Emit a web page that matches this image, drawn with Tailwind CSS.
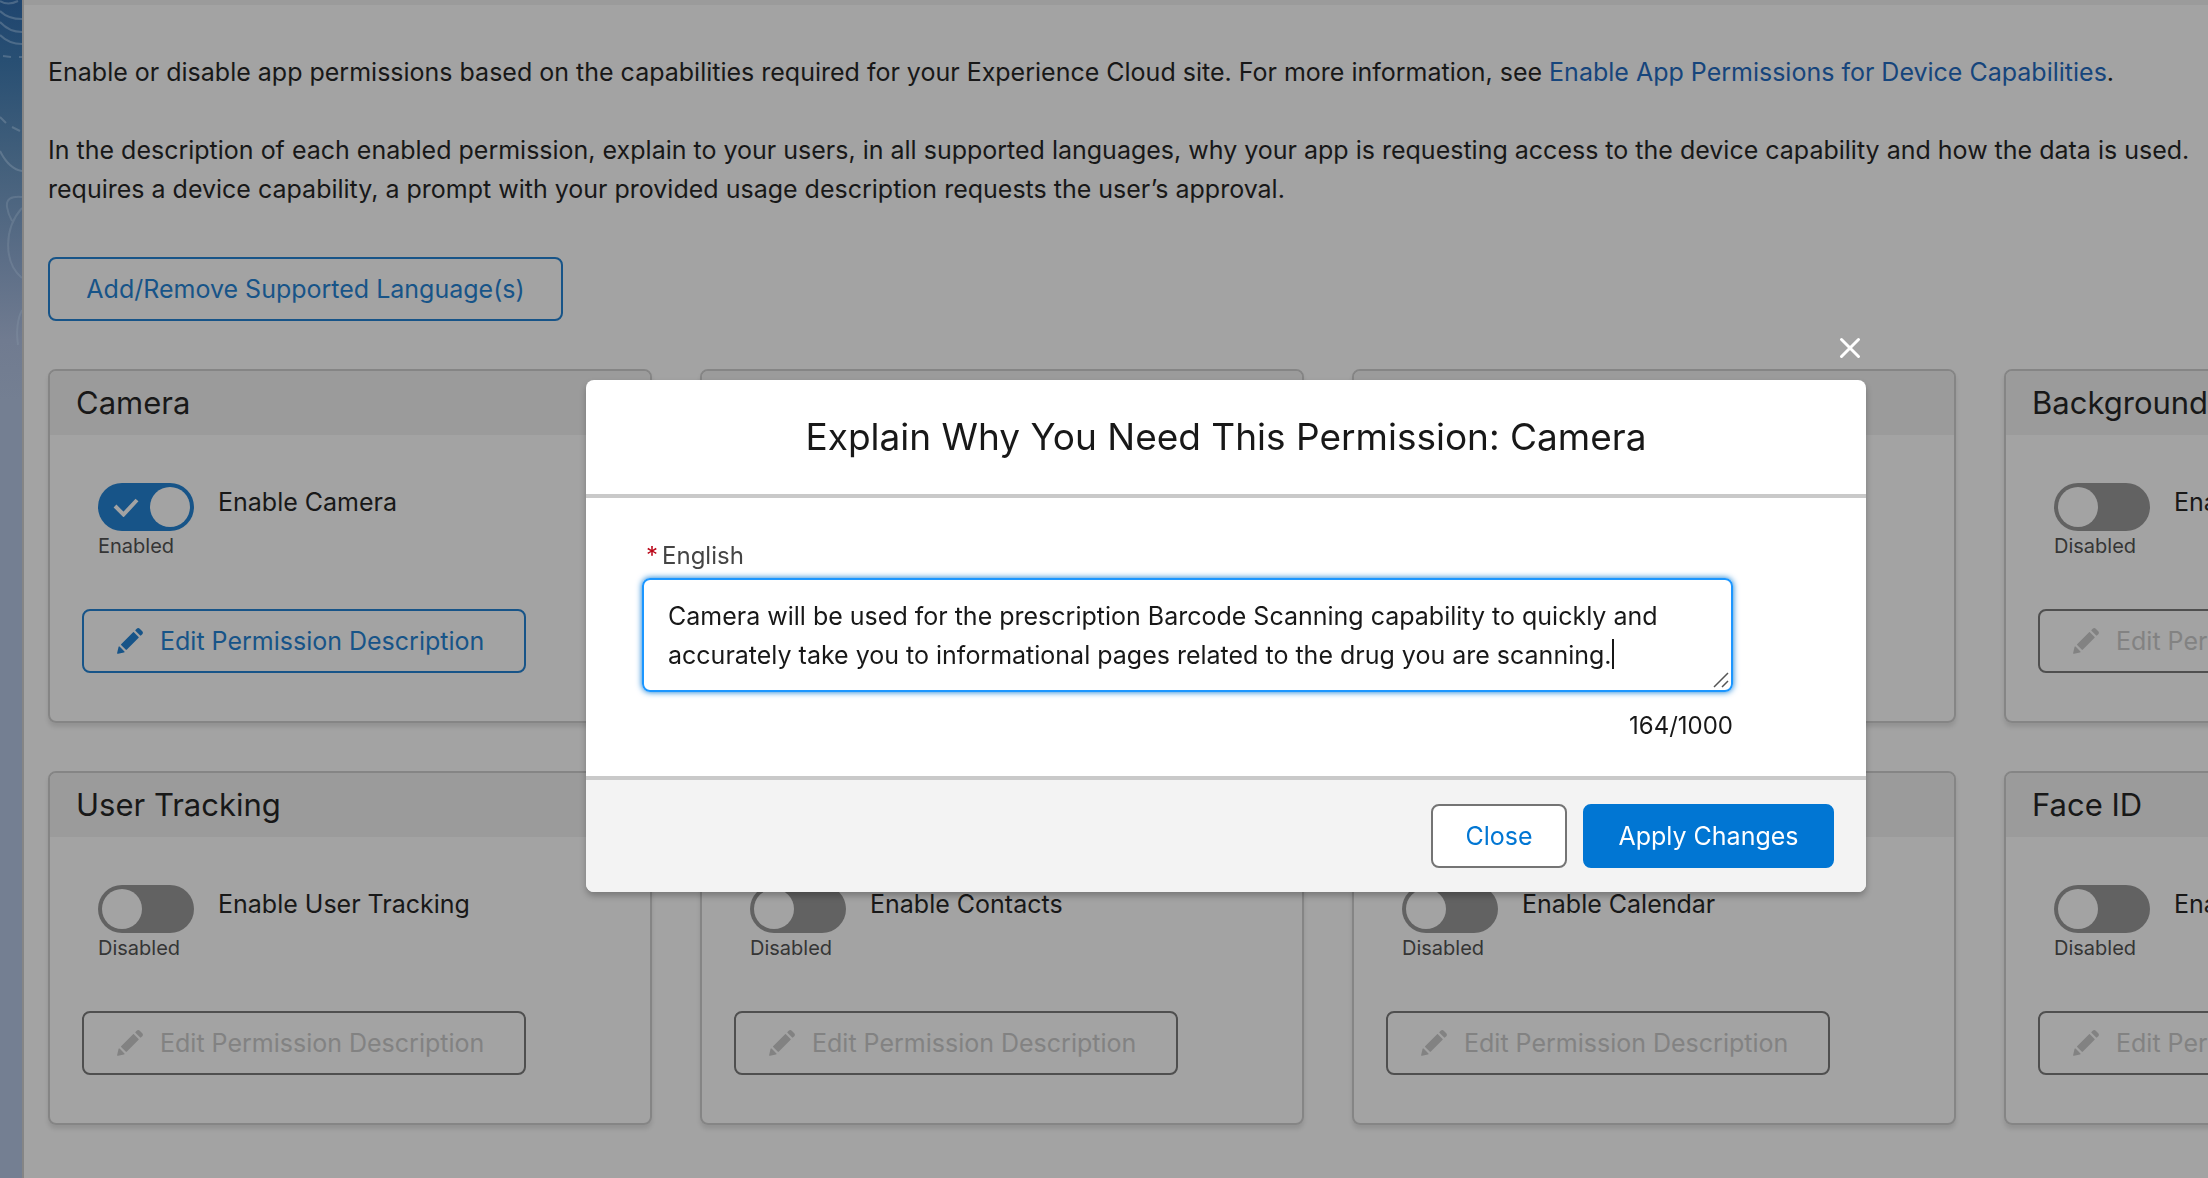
<!DOCTYPE html>
<html lang="en">
    <head>
        <meta charset="UTF-8">
        <title>App Permissions</title>
        <script src="https://cdn.jsdelivr.net/npm/@tailwindcss/browser@4"></script>
    </head>
    <body class="min-h-screen overflow-hidden bg-[#a3a3a3] font-[Inter,sans-serif] text-[25px] leading-[39px] text-[#181818]">
        <div class="flex min-h-screen">
            <!-- brand strip -->
            <div class="w-[22px] shrink-0 bg-[#747f92]">
                <svg class="block" width="22" height="400" viewBox="0 0 22 400" fill="none" stroke="#8a9aac" stroke-opacity="0.4" stroke-width="2">
                    <defs>
                        <linearGradient id="sky" x1="0" y1="0" x2="0" y2="1">
                            <stop offset="0" stop-color="#1f456f" />
                            <stop offset="0.15" stop-color="#284f73" />
                            <stop offset="0.4" stop-color="#425f7b" />
                            <stop offset="0.65" stop-color="#5c6e87" />
                            <stop offset="0.85" stop-color="#707b90" />
                            <stop offset="1" stop-color="#747f92" />
                        </linearGradient>
                    </defs>
                    <rect width="22" height="400" fill="url(#sky)" stroke="none" />
                    <path d="M0 1Q8 6 18 1M0 11Q8 19 22 19M0 22Q9 32 22 32M0 35Q9 44 22 44M3 56l8 1M19 57h3M0 117l6 6M12 127l8 4M0 151Q9 169 22 171" />
                    <path d="M22 197C11 196 6 199 7 207Q8 214 12 221M22 208C4 228 3 262 22 278M22 310Q15 324 18 345" stroke-opacity="0.3" />
                </svg>
            </div>
            <main class="grow border-l-2 border-[#858585]">
                <div class="h-[5px] bg-[#9b9b9b]"></div>
                <div class="min-w-[2608px] px-6 pt-12">
                    <p>Enable or disable app permissions based on the capabilities required for your Experience Cloud site. For more information, see <a href="#" class="text-[#16457c]">Enable App Permissions for Device Capabilities</a>.</p>
                    <p class="mt-[39px]">In the description of each enabled permission, explain to your users, in all supported languages, why your app is requesting access to the device capability and how the data is used.<br>requires a device capability, a prompt with your provided usage description requests the user’s approval.</p>
                    <button class="mt-12 h-16 min-w-[515px] rounded-lg border-2 border-[#175488] px-8 text-[#175488]">Add/Remove Supported Language(s)</button>
                    <div id="permissions" class="mt-12 grid grid-cols-[repeat(4,604px)] gap-12"></div>
                </div>
            </main>
        </div>

        <div class="fixed inset-0 flex items-start justify-center pt-[380px] pl-[244px]">
            <div role="dialog" aria-labelledby="dialogTitle" class="relative w-[1280px] rounded-lg bg-white shadow-[0_4px_6px_rgba(0,0,0,0.25)]">
                <button aria-label="Close dialog" class="absolute -top-11 right-1 p-px text-white">
                    <svg class="block" width="22" height="22" viewBox="0 0 22 22" stroke="currentColor" stroke-width="3" stroke-linecap="round">
                        <path d="M2.5 2.5l17 17M19.5 2.5l-17 17" />
                    </svg>
                </button>
                <header class="border-b-4 border-[#c9c9c9] py-8">
                    <h2 id="dialogTitle" class="text-center text-[37px] leading-[50px]">Explain Why You Need This Permission: Camera</h2>
                </header>
                <div class="px-14 pt-10 pb-8">
                    <label for="usage" class="block pl-1 text-[24px] leading-[36px] text-[#444]"><span class="mr-1 text-[#ba0517]">*</span>English</label>
                    <div class="relative mt-1 w-[1091px]">
                        <textarea id="usage" rows="2" spellcheck="false" class="block h-[114px] w-full resize-none overflow-hidden rounded-lg border-2 border-[#1b96ff] px-6 py-[17px] shadow-[0_0_6px_#0176d3] outline-none">Camera will be used for the prescription Barcode Scanning capability to quickly and accurately take you to informational pages related to the drug you are scanning.</textarea>
                        <!-- text cursor and resize grip -->
                        <span class="absolute top-[61px] left-[970px] h-[30px] w-[2px] bg-[#181818]"></span>
                        <svg class="absolute right-1 bottom-1" width="16" height="16" viewBox="0 0 16 16" stroke="#555" stroke-width="1.5">
                            <path d="M1 15L15 1M9 15l6-6" />
                        </svg>
                    </div>
                    <p class="mt-4 w-[1091px] text-right text-[24px] leading-9">164/1000</p>
                </div>
                <footer class="flex justify-end gap-4 rounded-b-lg border-t-4 border-[#c9c9c9] bg-[#f3f3f3] px-8 py-6">
                    <button class="h-16 min-w-[136px] rounded-lg border-2 border-[#747474] bg-white px-8 text-[#0176d3]">Close</button>
                    <button class="h-16 min-w-[251px] rounded-lg border-2 border-[#0176d3] bg-[#0176d3] px-8 text-white">Apply Changes</button>
                </footer>
            </div>
        </div>

        <script>
            const permissions = [
                { name: 'Camera', enabled: true },
                { name: 'Location' },
                { name: 'Photos' },
                { name: 'Background' },
                { name: 'User Tracking' },
                { name: 'Contacts' },
                { name: 'Calendar' },
                { name: 'Face ID' },
            ];

            const pencil = `<svg width="28" height="28" viewBox="0 0 52 52" fill="currentColor"><path d="M9.5 33.4l8.9 8.9c.4.4 1 .4 1.4 0L42 20c.4-.4.4-1 0-1.4l-8.8-8.8c-.4-.4-1-.4-1.4 0L9.5 32.1c-.4.4-.4 1 0 1.3zM36.1 5.7c-.4.4-.4 1 0 1.4l8.8 8.8c.4.4 1 .4 1.4 0l2.5-2.5c1.6-1.5 1.6-3.9 0-5.5l-4.7-4.7c-1.6-1.6-4.1-1.6-5.7 0zM2.1 48.2c-.2 1 .7 1.9 1.7 1.7l10.9-2.6c.4-.1.7-.3.9-.5l.2-.2c.2-.2.3-.9-.1-1.3l-9-9c-.4-.4-1.1-.3-1.3-.1l-.2.2c-.3.3-.4.6-.5.9z"/></svg>`;
            const check = `<svg class="pointer-events-none absolute top-[15px] left-[15px]" width="26" height="19" viewBox="0 0 26 19" fill="none" stroke="#a3a3a3" stroke-width="4"><path d="M2 8l8.5 8.5L24 2"/></svg>`;

            document.getElementById('permissions').innerHTML = permissions.map((p, i) => `
                <section class="overflow-hidden rounded-lg border-2 border-[#858585] shadow-[0_4px_4px_rgba(0,0,0,0.1)]">
                    <h3 class="h-16 bg-[#9b9b9b] px-[26px] pt-3 text-[31px] leading-[40px] whitespace-nowrap">${p.name}</h3>
                    <div class="px-8 py-12">
                        <div class="flex gap-6 pl-4">
                            <div class="text-[20px] leading-[30px] text-[#353535]">
                                <div class="relative h-12 w-24">
                                    <input type="checkbox" id="toggle${i}" ${p.enabled ? 'checked' : ''} class="block h-12 w-24 appearance-none rounded-full bg-[#626262] before:absolute before:top-1 before:left-1 before:size-10 before:rounded-full before:bg-[#a3a3a3] checked:bg-[#175488] checked:before:left-[52px]">
                                    ${p.enabled ? check : ''}
                                </div>
                                ${p.enabled ? 'Enabled' : 'Disabled'}
                            </div>
                            <label for="toggle${i}" class="whitespace-nowrap">Enable ${p.name}</label>
                        </div>
                        <button ${p.enabled ? '' : 'disabled'} class="mt-12 flex h-16 min-w-[444px] items-center gap-4 rounded-lg border-2 border-[#175488] px-8 text-[#175488] disabled:border-[#4f4f4f] disabled:text-[#828282]">${pencil}Edit Permission Description</button>
                    </div>
                </section>`).join('');
        </script>
    </body>
</html>
